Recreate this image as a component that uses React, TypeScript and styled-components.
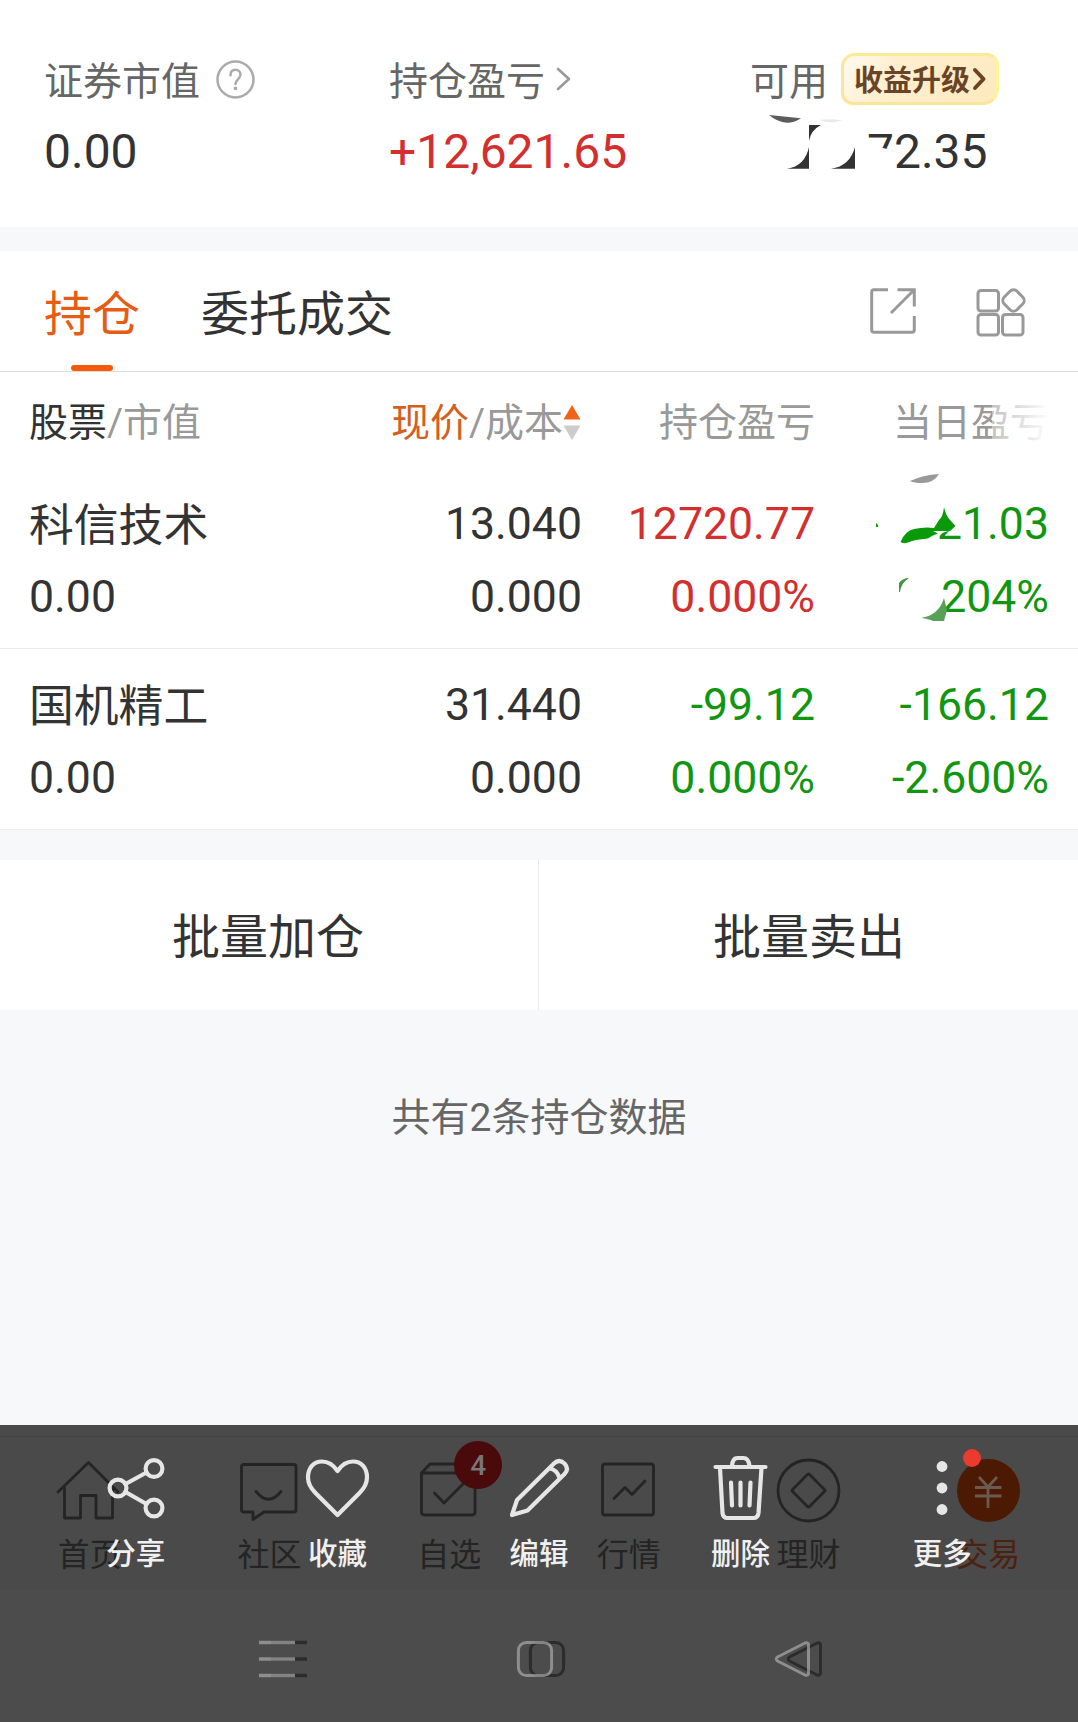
import React from "react";
import styled, { createGlobalStyle } from "styled-components";

const GlobalStyle = createGlobalStyle`
  * { box-sizing: border-box; }
  body {
    margin: 0;
    background: #f7f8fa;
    font-family: Roboto, "Noto Sans CJK SC", sans-serif;
    color: #333;
  }
  svg { display: block; overflow: visible; flex: none; }
`;

type Tone = "dark" | "red" | "green";
const tones: Record<Tone, string> = { dark: "#333333", red: "#d32f2f", green: "#119611" };

const Screen = styled.main`
  width: 1078px;
  height: 1722px;
  display: flex;
  flex-direction: column;
  background: #f7f8fa;
  overflow: hidden;
  white-space: nowrap;
`;

/* Account summary */
const Summary = styled.section`
  height: 227px;
  padding: 53px 0 0 44px;
  display: grid;
  grid-template-columns: 345px 361px 1fr;
  background: #fff;
`;
const Metric = styled.div`
  display: flex;
  flex-direction: column;
  gap: 17px;
`;
const MetricLabel = styled.div`
  height: 52px;
  display: flex;
  align-items: center;
  font-size: 39px;
  line-height: 52px;
  color: #666;
`;
const LabelText = styled.span`
  padding-top: 5px;
`;
const MetricValue = styled.div<{ $tone?: Tone }>`
  height: 60px;
  display: flex;
  font-size: 48px;
  line-height: 60px;
  color: ${(p) => tones[p.$tone ?? "dark"]};
`;
const HelpIcon = styled.svg`
  margin-left: 16px;
`;
const Chevron = styled.svg`
  margin-left: 10px;
`;
const Upgrade = styled.span`
  height: 52px;
  width: 158px;
  margin-left: 13px;
  padding-left: 10px;
  display: flex;
  align-items: center;
  gap: 3px;
  border: 3px solid #fae598;
  border-top-color: #fbeb97;
  border-right-color: #fdf39a;
  border-radius: 14px 12px 16px 12px;
  background: linear-gradient(120deg, #fffaf0 0%, #feefd0 30%, #fdeabf 100%);
  color: #6a4427;
  font-size: 29px;
  font-weight: 700;
  line-height: 46px;
`;
const UpgradeText = styled.span`
  padding-top: 3px;
`;

/* Holdings */
const Holdings = styled.section`
  margin-top: 24px;
  background: #fff;
`;
const TabBar = styled.nav`
  height: 121px;
  padding: 0 52px 0 44px;
  display: flex;
  border-bottom: 1px solid #dcdcdc;
`;
const Tab = styled.div<{ $active?: boolean }>`
  height: 120px;
  margin-right: 61px;
  display: flex;
  flex-direction: column;
  align-items: center;
  justify-content: space-between;
  font-size: 48px;
  line-height: 111px;
  padding-top: 8px;
  color: ${(p) => (p.$active ? "#e65c14" : "#333")};
  &::after {
    content: "";
    width: 42px;
    height: 6px;
    flex: none;
    margin-top: -5px;
    border-radius: 3px;
    background: ${(p) => (p.$active ? "#f55a0c" : "transparent")};
  }
`;
const TabTools = styled.div`
  margin-left: auto;
  display: flex;
  gap: 60px;
  padding-top: 37px;
`;
const Columns = styled.div`
  padding-left: 29px;
  display: grid;
  grid-template-columns: 353px 200px 233px 234px;
`;
const HeaderRow = styled(Columns)`
  height: 96px;
  padding-top: 21px;
  font-size: 39px;
  line-height: 60px;
  color: #999;
`;
const HeaderCell = styled.div<{ $end?: boolean }>`
  position: relative;
  display: flex;
  align-items: center;
  justify-content: ${(p) => (p.$end ? "flex-end" : "flex-start")};
  height: 60px;
`;
const Strong = styled.span<{ $accent?: boolean }>`
  color: ${(p) => (p.$accent ? "#d4601f" : "#333")};
`;
const SortIcon = styled.svg`
  margin: 0 1px 2px 0;
`;
const Fade = styled.i`
  position: absolute;
  right: -12px;
  top: 0;
  width: 69px;
  height: 60px;
  background: linear-gradient(90deg, rgba(255, 255, 255, 0.4), rgba(255, 255, 255, 0.97) 80%);
`;
const StockRow = styled(Columns)`
  height: 181px;
  padding-top: 20px;
  border-bottom: 1px solid #ececec;
`;
const Cell = styled.div<{ $tone?: Tone; $end?: boolean }>`
  position: relative;
  display: grid;
  grid-auto-rows: 73px;
  align-content: start;
  justify-items: ${(p) => (p.$end ? "end" : "start")};
  font-size: 44.6px;
  line-height: 73px;
  color: ${(p) => tones[p.$tone ?? "dark"]};
`;
const StockName = styled.span`
  padding-top: 2px;
  line-height: 72px;
  height: 73px;
  font-size: 44.8px;
`;
const Smudge = styled.svg`
  position: absolute;
  left: 0;
  top: 0;
`;

/* Batch actions */
const BatchBar = styled.section`
  height: 150px;
  margin-top: 30px;
  display: grid;
  grid-template-columns: 538px 540px;
  background: #fff;
`;
const BatchButton = styled.button`
  border: 0;
  padding: 3px 2px 0 0;
  background: none;
  font: inherit;
  font-size: 48px;
  color: #333;
  line-height: 150px;
  height: 150px;
  overflow: hidden;
  & + & {
    padding: 3px 0 0 1px;
    border-left: 1px solid #ebebeb;
  }
`;
const CountNote = styled.p`
  margin: 78px 0 0;
  text-align: center;
  font-size: 39px;
  line-height: 60px;
  color: #666;
`;

/* Bottom area: dimmed app tabs below, gallery toolbar on top */
const Footer = styled.footer`
  position: relative;
  height: 297px;
  margin-top: auto;
  padding-top: 11px;
  background: linear-gradient(#4a4a4a 165px, #4c4c4c 165px);
`;
const AppTabs = styled.div`
  height: 156px;
  display: grid;
  grid-template-columns: repeat(6, 1fr);
  border-top: 1px solid #424242;
`;
const AppTab = styled.div<{ $accent?: boolean }>`
  position: relative;
  padding-top: 20px;
  display: flex;
  flex-direction: column;
  align-items: center;
  gap: 10px;
  font-size: 32px;
  line-height: 44px;
  color: ${(p) => (p.$accent ? "#4d2110" : "#242424")};
`;
const CountBadge = styled.b`
  position: absolute;
  left: 95px;
  top: 4px;
  width: 48px;
  height: 48px;
  border-radius: 50%;
  background: #4a090a;
  color: #777;
  font-size: 28px;
  font-weight: 500;
  line-height: 50px;
  text-align: center;
`;
const Toolbar = styled.div`
  position: absolute;
  inset: 0;
  padding: 28px 35px 0;
  display: grid;
  grid-template-columns: repeat(5, 1fr);
  color: #f0f0f0;
`;
const Tool = styled.div`
  display: flex;
  flex-direction: column;
  align-items: center;
  gap: 9px;
  font-size: 29.5px;
  font-weight: 500;
  line-height: 44px;
`;
const SystemNav = styled.div`
  height: 130px;
  padding: 49px 0 0 259px;
  display: flex;
  gap: 210px;
`;

const line = { fill: "none", stroke: "currentColor", strokeLinecap: "round", strokeLinejoin: "round" } as const;

const AppGlyph = ({ children }: { children: React.ReactNode }) => (
  <svg width="64" height="66" viewBox="0 0 64 66" {...line} strokeWidth="2.8">{children}</svg>
);
const ToolGlyph = ({ children }: { children: React.ReactNode }) => (
  <svg width="68" height="70" viewBox="0 0 68 70" {...line} stroke="#e6e6e6" strokeWidth="4.2">{children}</svg>
);
const NavGlyph = ({ draw, weight = 3 }: { draw: React.ReactNode; weight?: number }) => (
  <svg width="48" height="36" viewBox="0 0 48 36" {...line} strokeWidth={weight}>
    <g stroke="#2c2c2c" transform="translate(12 0)">{draw}</g>
    <g stroke="#b0b0b0" strokeOpacity="0.66">{draw}</g>
  </svg>
);

const stocks = [
  {
    name: "科信技术", value: "0.00", price: "13.040", cost: "0.000",
    profit: "12720.77", rate: "0.000%", profitTone: "red" as Tone,
    day: "21.03", dayRate: "204%", smudged: true,
  },
  {
    name: "国机精工", value: "0.00", price: "31.440", cost: "0.000",
    profit: "-99.12", rate: "0.000%", profitTone: "green" as Tone,
    day: "-166.12", dayRate: "-2.600%", smudged: false,
  },
];

export default function App() {
  return (
    <Screen>
      <GlobalStyle />
      <Summary>
        <Metric>
          <MetricLabel>
            <LabelText>证券市值</LabelText>
            <HelpIcon width="39" height="39" viewBox="0 0 39 39" {...line} stroke="#ababab" strokeWidth="2.5">
              <circle cx="19.5" cy="19.5" r="18" />
              <path d="M14.5 15.2c0-3.4 2.1-5.4 5-5.4s5 1.9 5 4.8c0 4.6-5 4.8-5 9.3" />
              <circle cx="19.5" cy="28.3" r="1.1" fill="#ababab" strokeWidth="1.6" />
            </HelpIcon>
          </MetricLabel>
          <MetricValue>0.00</MetricValue>
        </Metric>
        <Metric>
          <MetricLabel>
            <LabelText>持仓盈亏</LabelText>
            <Chevron width="16" height="24" viewBox="0 0 16 24" {...line} stroke="#999" strokeWidth="2.6">
              <path d="M3 2l11 10L3 22" />
            </Chevron>
          </MetricLabel>
          <MetricValue $tone="red">+12,621.65</MetricValue>
        </Metric>
        <Metric>
          <MetricLabel>
            <LabelText>可用</LabelText>
            <Upgrade>
              <UpgradeText>收益升级</UpgradeText>
              <svg width="13" height="22" viewBox="0 0 13 22" {...line} strokeWidth="4">
                <path d="M2 2l8.500 9L2 20" />
              </svg>
            </Upgrade>
          </MetricLabel>
          <MetricValue>
            <svg width="117" height="60" viewBox="750 122 117 60" style={{ position: "relative" }} fill="#333">
              <path d="M769 115L801 118.2Q794 122.7 787 122.7Q777 122 769 115Z" fill="#5c5c5c" />
              <path d="M819 120Q830 118.5 842 120.3Q832 124.5 819 120Z" fill="#e9e9e9" />
              <path d="M809 125H821Q811 130 809 141Z" />
              <path d="M809 147V168.8H787Q805 166 809 147Z" />
              <path d="M855 147V168.8H831Q850 166 855 147Z" />
              <path d="M862 144L881 147.500L887 149L893 149V172H862Z" fill="#fff" />
            </svg>
            72.35
          </MetricValue>
        </Metric>
      </Summary>

      <Holdings>
        <TabBar>
          <Tab $active>持仓</Tab>
          <Tab>委托成交</Tab>
          <TabTools>
            <svg width="46" height="46" viewBox="0 0 46 46" fill="none" stroke="#999" strokeWidth="3">
              <path d="M18 1.7H4Q1.7 1.7 1.7 4V42Q1.7 44.3 4 44.3H42Q44.3 44.3 44.3 42V28M27.5 1.7H44.3V18.5M43.5 2.5L21 25" />
            </svg>
            <svg width="50" height="48" viewBox="0 0 50 48" fill="none" stroke="#999" strokeWidth="3">
              <rect x="2" y="2.5" width="20.500" height="20.500" rx="3" />
              <rect x="2" y="26.5" width="20.500" height="20.500" rx="3" />
              <rect x="26.500" y="26.5" width="20.500" height="20.500" rx="3" />
              <rect x="28.500" y="3.500" width="18" height="18" rx="5" transform="rotate(45 37.5 12.5)" />
            </svg>
          </TabTools>
        </TabBar>
        <HeaderRow>
          <HeaderCell><Strong>股票</Strong>/市值</HeaderCell>
          <HeaderCell $end>
            <Strong $accent>现价</Strong>/成本
            <SortIcon width="18" height="36" viewBox="0 0 18 36">
              <path d="M9 1L17.500 15.5H0.500Z" fill="#f0641a" />
              <path d="M9 36L17.500 21.500H0.500Z" fill="#ccc" />
            </SortIcon>
          </HeaderCell>
          <HeaderCell $end>持仓盈亏</HeaderCell>
          <HeaderCell $end>当日盈亏<Fade /></HeaderCell>
        </HeaderRow>
        {stocks.map((s) => (
          <StockRow key={s.name}>
            <Cell><StockName>{s.name}</StockName><span>{s.value}</span></Cell>
            <Cell $end><span>{s.price}</span><span>{s.cost}</span></Cell>
            <Cell $end $tone={s.profitTone}><span>{s.profit}</span><span>{s.rate}</span></Cell>
            <Cell $end $tone="green">
              <span>{s.day}</span>
              <span>{s.dayRate}</span>
              {s.smudged && (
                <Smudge width="234" height="161" viewBox="815 488 234 161" fill="#089a08">
                  <path d="M910 481Q923 475 939 474Q934 483 922 483Q914 483 910 481Z" fill="#999" />
                  <path d="M876 523L878 525V527H876Z" />
                  <path d="M932 500H962V524L953 527L948 531L939 534L932 534Z" fill="#fff" />
                  <path d="M900.500 542Q905 531 914 529Q925 526.500 934 528L939 520Q943 517 944 507Q946 516 950 520L955.500 526L950 531L933 531L938 533.500Q933 535 928 538.500Q914 539.500 908 542.500Q903 544 900.500 542Z" />
                  <path d="M899 592V583Q903 578 909 578Q901 583 900 592Z" fill="#3f963f" />
                  <path d="M921 618Q939 615 944 598L947 610L944 621H933Q929 619 921 618Z" fill="#58a058" />
                </Smudge>
              )}
            </Cell>
          </StockRow>
        ))}
      </Holdings>

      <BatchBar>
        <BatchButton>批量加仓</BatchButton>
        <BatchButton>批量卖出</BatchButton>
      </BatchBar>
      <CountNote>共有2条持仓数据</CountNote>

      <Footer>
        <AppTabs>
          <AppTab>
            <AppGlyph><path d="M0 35L30.500 5.500L60 35M6.500 31V61H22.500V38.500H38V61H54.500V31" /></AppGlyph>
            首页
          </AppTab>
          <AppTab>
            <AppGlyph>
              <path d="M7 7.500H57Q59 7.500 59 9.500V53Q59 55 57 55H27L16 62.500V55H7Q4.500 55 4.500 53V9.500Q4.500 7.500 7 7.500Z" />
              <path d="M19 34.500Q31.500 50 44 34.500" />
            </AppGlyph>
            社区
          </AppTab>
          <AppTab>
            <AppGlyph>
              <path d="M4.500 16L13 7H50L58 16V55Q58 58 55 58H7.500Q4.500 58 4.500 55V16H58M17.500 36L27 46L46 27" />
            </AppGlyph>
            自选
            <CountBadge>4</CountBadge>
          </AppTab>
          <AppTab>
            <AppGlyph>
              <rect x="5.500" y="7" width="51" height="51" rx="2.500" />
              <path d="M17 41.500L28 30.500L35 37.500L48 24" />
            </AppGlyph>
            行情
          </AppTab>
          <AppTab>
            <AppGlyph>
              <circle cx="32.500" cy="33.500" r="30.500" />
              <rect x="20.500" y="21.500" width="24" height="24" rx="1.500" transform="rotate(45 32.5 33.5)" />
            </AppGlyph>
            理财
          </AppTab>
          <AppTab $accent>
            <AppGlyph>
              <circle cx="32.500" cy="33.500" r="31.500" fill="#4c1a02" stroke="none" />
              <path d="M23 20L32 30L41 20M32 30V51M19 30.500H45.500M19 39H45.500" stroke="#6a5a52" strokeLinecap="butt" />
            </AppGlyph>
            交易
          </AppTab>
        </AppTabs>
        <SystemNav>
          <NavGlyph weight={3.6} draw={<path d="M0 1.500H36M0 18H36M0 34.500H36" strokeLinecap="butt" />} />
          <NavGlyph draw={<rect x="1.400" y="1.400" width="33.200" height="33.200" rx="8" />} />
          <NavGlyph draw={<path d="M2.500 16Q0 18 2.500 20L30 34Q33.500 35 33.500 32V4Q33.500 1 30 2Z" />} />
        </SystemNav>
        <Toolbar>
          <Tool>
            <ToolGlyph>
              <circle cx="16" cy="35" r="8.400" />
              <circle cx="52" cy="15.500" r="8.400" />
              <circle cx="52" cy="55" r="8.400" />
              <path d="M23.500 31L44.500 19.500M23.500 39L44.500 51" />
            </ToolGlyph>
            分享
          </Tool>
          <Tool>
            <ToolGlyph>
              <path d="M34.500 18C29.500 10.500 23.500 8.500 19 8.500C10 8.500 5 15.500 5 24.500C5 31 8 35.500 12.500 40L34.500 62L56.500 40C61 35.500 64 31 64 24.500C64 15.500 59 8.500 50 8.500C45.500 8.500 39.500 10.500 34.500 18Z" />
            </ToolGlyph>
            收藏
          </Tool>
          <Tool>
            <ToolGlyph>
              <path d="M7 62L12 47L49 10.500Q54 5.500 59.500 10.500Q64.500 16 59.500 21L22.500 57.500ZM44.500 15.500Q52 16.500 54.500 25" />
            </ToolGlyph>
            编辑
          </Tool>
          <Tool>
            <ToolGlyph>
              <path d="M8.500 14H58.500M13 15L15.500 60Q16 65 20.500 65H46.500Q51 65 51.500 60L54.500 15M25 13Q25.500 5 30.500 5H36.500Q41.500 5 42.500 13M24 29.500L25 52.500M33.500 29.500V52.500M43.500 29.500L42.500 52.500" />
            </ToolGlyph>
            删除
          </Tool>
          <Tool>
            <ToolGlyph>
              <g fill="#e6e6e6" stroke="none">
                <circle cx="34" cy="13.500" r="5.400" />
                <circle cx="34" cy="35" r="5.400" />
                <circle cx="34" cy="56.500" r="5.400" />
                <circle cx="64" cy="5" r="9" fill="#eb3a2e" />
              </g>
            </ToolGlyph>
            更多
          </Tool>
        </Toolbar>
      </Footer>
    </Screen>
  );
}
